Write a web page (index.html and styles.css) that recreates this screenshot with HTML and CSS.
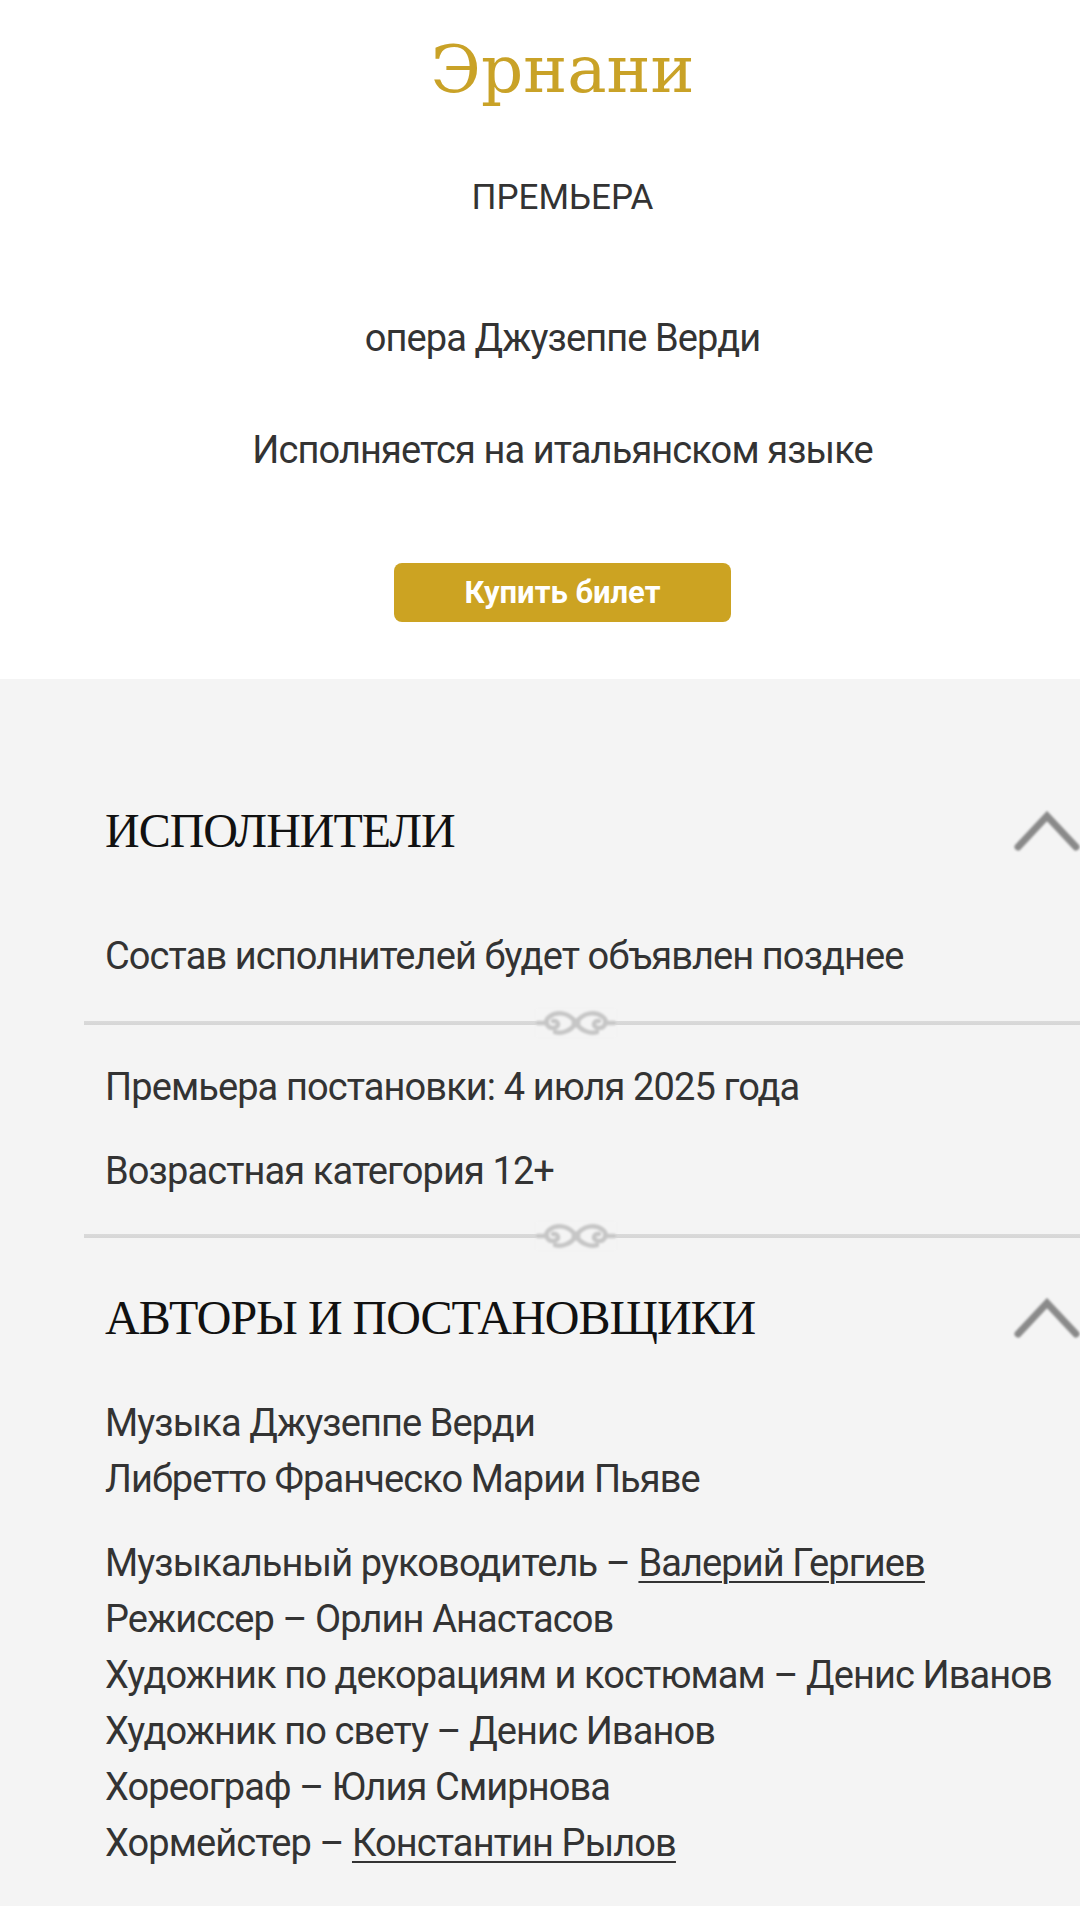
FILE: index.html
```html
<!DOCTYPE html>
<html lang="ru">
<head>
<meta charset="utf-8">
<title>Эрнани</title>
<link rel="stylesheet" href="styles.css">
</head>
<body>
<section class="hero">
  <h1 class="hero-title">Эрнани</h1>
  <div class="hero-badge">ПРЕМЬЕРА</div>
  <p class="hero-line hero-line-first">опера Джузеппе Верди</p>
  <p class="hero-line hero-line-second">Исполняется на итальянском языке</p>
  <a class="buy-btn" href="#">Купить билет</a>
</section>

<section class="details">
  <div class="block-head block-head-first">
    <h2 class="block-title">ИСПОЛНИТЕЛИ</h2>
    <svg class="chevron" viewBox="0 0 66 40" width="66" height="40"><polyline points="4,36 33,5 62,36" fill="none" stroke="#8a8a8a" stroke-width="7" stroke-linecap="round" stroke-linejoin="miter"/></svg>
  </div>
  <p class="text text-note">Состав исполнителей будет объявлен позднее</p>

  <div class="sep sep-first">
    <svg class="ornament" viewBox="0 0 80 28" width="80" height="28"><g fill="none" stroke="#c6c6c6" stroke-width="4.5" stroke-linecap="round"><path d="M40 14 C33 3 21 2 13 8 C8 12 11 20 18 19 C24 18 23 11 17 12"/><path d="M40 14 C47 3 59 2 67 8 C72 12 69 20 62 19 C56 18 57 11 63 12"/><path d="M40 14 C35 22 26 25 19 23 M40 14 C45 22 54 25 61 23"/><path d="M2 14 H11 M69 14 H78"/></g><circle cx="40" cy="14" r="4.5" fill="#c6c6c6"/></svg>
  </div>

  <p class="text text-premiere">Премьера постановки: 4 июля 2025 года</p>
  <p class="text text-age">Возрастная категория 12+</p>

  <div class="sep sep-second">
    <svg class="ornament" viewBox="0 0 80 28" width="80" height="28"><g fill="none" stroke="#c6c6c6" stroke-width="4.5" stroke-linecap="round"><path d="M40 14 C33 3 21 2 13 8 C8 12 11 20 18 19 C24 18 23 11 17 12"/><path d="M40 14 C47 3 59 2 67 8 C72 12 69 20 62 19 C56 18 57 11 63 12"/><path d="M40 14 C35 22 26 25 19 23 M40 14 C45 22 54 25 61 23"/><path d="M2 14 H11 M69 14 H78"/></g><circle cx="40" cy="14" r="4.5" fill="#c6c6c6"/></svg>
  </div>

  <div class="block-head block-head-second">
    <h2 class="block-title">АВТОРЫ И ПОСТАНОВЩИКИ</h2>
    <svg class="chevron" viewBox="0 0 66 40" width="66" height="40"><polyline points="4,36 33,5 62,36" fill="none" stroke="#8a8a8a" stroke-width="7" stroke-linecap="round" stroke-linejoin="miter"/></svg>
  </div>
  <p class="text text-authors">Музыка Джузеппе Верди<br>Либретто Франческо Марии Пьяве</p>
  <p class="text text-crew">Музыкальный руководитель – <a class="person" href="#">Валерий Гергиев</a><br>Режиссер – Орлин Анастасов<br>Художник по декорациям и костюмам – Денис Иванов<br>Художник по свету – Денис Иванов<br>Хореограф – Юлия Смирнова<br>Хормейстер – <a class="person" href="#">Константин Рылов</a></p>
</section>
</body>
</html>
```

FILE: styles.css
```css
html, body {
  margin: 0;
  padding: 0;
}
body {
  width: 1080px;
  min-height: 1906px;
  background: #f4f4f4;
  font-family: Roboto, "Noto Sans", "Liberation Sans", sans-serif;
  color: #333333;
  overflow: hidden;
}

/* ---------- hero ---------- */
.hero {
  background: #ffffff;
  padding: 30px 0 57px 45px;
  display: flex;
  flex-direction: column;
  align-items: center;
  text-align: center;
}
.hero-title {
  margin: 0;
  font-family: "DejaVu Serif", "Liberation Serif", serif;
  font-weight: normal;
  font-size: 66px;
  line-height: 80px;
  color: #c9a227;
}
.hero-badge {
  margin-top: 67px;
  font-size: 35px;
  line-height: 42px;
  color: #333333;
}
.hero-line {
  margin: 0;
  font-size: 38px;
  line-height: 56px;
  letter-spacing: -0.9px;
  color: #333333;
}
.hero-line-first {
  margin-top: 91px;
}
.hero-line-second {
  margin-top: 56px;
}
.buy-btn {
  margin-top: 85px;
  width: 337px;
  height: 59px;
  border-radius: 8px;
  background: #cca322;
  color: #ffffff;
  font-weight: bold;
  font-size: 31px;
  text-decoration: none;
  display: flex;
  align-items: center;
  justify-content: center;
}

/* ---------- details ---------- */
.details {
  background: #f4f4f4;
  padding: 123px 0 0 84px;
  display: flex;
  flex-direction: column;
}
.block-head {
  display: flex;
  align-items: center;
  justify-content: space-between;
  padding-left: 21px;
  height: 58px;
}
.block-head-second {
  margin-top: 41px;
}
.block-title {
  margin: 0;
  font-family: "Liberation Serif", "DejaVu Serif", serif;
  font-weight: normal;
  font-size: 48px;
  line-height: 58px;
  letter-spacing: -1px;
  color: #111111;
}
.chevron {
  display: block;
  filter: blur(0.8px);
}
.text {
  margin: 0;
  padding-left: 21px;
  font-size: 38px;
  line-height: 56px;
  letter-spacing: -0.9px;
  color: #333333;
  white-space: nowrap;
}
.text-note {
  margin-top: 68px;
}
.text-premiere {
  margin-top: 24px;
}
.text-age {
  margin-top: 28px;
}
.text-authors {
  margin-top: 48px;
}
.text-crew {
  margin-top: 28px;
}
.person {
  color: #333333;
  text-decoration: underline;
  text-decoration-thickness: 2px;
  text-underline-offset: 5px;
}

.sep {
  height: 24px;
  display: flex;
  align-items: center;
  justify-content: center;
  padding-right: 12px;
  background: linear-gradient(to bottom, transparent 10px, #dadada 10px, #d6d6d6 14px, transparent 14px);
}
.sep-first {
  margin-top: 27px;
}
.sep-second {
  margin-top: 25px;
}
.ornament {
  display: block;
  margin: -2px 0;
  background: #f4f4f4;
  filter: blur(1.3px);
}
```
